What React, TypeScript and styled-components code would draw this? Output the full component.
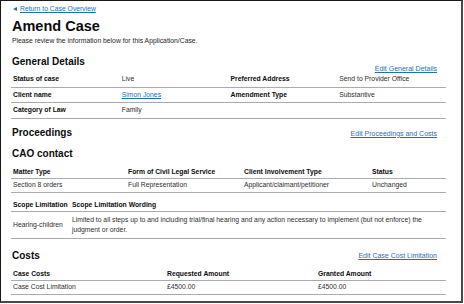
import React from 'react'
import styled, { createGlobalStyle } from 'styled-components'

const GlobalStyle = createGlobalStyle`
    html, body {
        margin: 0;
        padding: 0;
        background: #ffffff;
    }
    body {
        font-family: "Liberation Sans", Arial, sans-serif;
        color: #0b0c0c;
    }
`

const Frame = styled.div`
    box-sizing: border-box;
    width: 463px;
    height: 303px;
    border: 1px solid #1a1a1a;
    border-right: 2px solid #4a4a4a;
    border-bottom: 2px solid #4a4a4a;
    padding: 4px 15px 0 10px;
    overflow: hidden;
`

const BackLink = styled.a`
    display: flex;
    align-items: center;
    gap: 3px;
    padding-left: 2px;
    font-size: 6.8px;
    line-height: 8px;
    color: #1d70b8;
    span {
        text-decoration: underline;
    }
`

const Arrow = styled.i`
    width: 0;
    height: 0;
    border-top: 2.5px solid transparent;
    border-bottom: 2.5px solid transparent;
    border-right: 4px solid #1d70b8;
`

const Title = styled.h1`
    margin: 5px 0 0;
    padding-left: 1px;
    font-size: 14.5px;
    line-height: 16px;
    font-weight: 700;
`

const Intro = styled.p`
    margin: 1.5px 0 0;
    padding-left: 1px;
    font-size: 6.8px;
    line-height: 9px;
    color: #262626;
`

const SectionHeader = styled.div<{ $top: number }>`
    display: flex;
    justify-content: space-between;
    align-items: flex-start;
    margin-top: ${(p) => p.$top}px;
`

const SectionTitle = styled.h2`
    margin: 0;
    padding-left: 1px;
    font-size: 10px;
    line-height: 12px;
    font-weight: 700;
`

const EditLink = styled.a<{ $drop: number }>`
    margin-top: ${(p) => p.$drop}px;
    margin-right: 9px;
    font-size: 7px;
    line-height: 7px;
    color: #1d70b8;
    text-decoration: underline;
`

const Table = styled.div<{ $cols: string; $top: number }>`
    display: grid;
    grid-template-columns: ${(p) => p.$cols};
    margin-top: ${(p) => p.$top}px;
`

const Cell = styled.div<{ $head?: boolean; $pad?: number; $lh?: number }>`
    display: flex;
    align-items: center;
    padding: ${(p) => p.$pad ?? 2}px 2px;
    border-bottom: 1px solid #a9acae;
    font-size: 6.8px;
    font-weight: ${(p) => (p.$head ? 700 : 400)};
    line-height: ${(p) => p.$lh ?? 8.5}px;
    white-space: ${(p) => (p.$head ? 'nowrap' : 'normal')};
    color: ${(p) => (p.$head ? '#0b0c0c' : '#2e2e2e')};
`

const InlineLink = styled.a`
    color: #1d70b8;
    text-decoration: underline;
`

const general: [string, React.ReactNode, string, string][] = [
    ['Status of case', 'Live', 'Preferred Address', 'Send to Provider Office'],
    [
        'Client name',
        <InlineLink>Simon Jones</InlineLink>,
        'Amendment Type',
        'Substantive',
    ],
    ['Category of Law', 'Family', '', ''],
]

export default function App(): JSX.Element {
    return (
        <>
            <GlobalStyle />
            <Frame>
                <BackLink>
                    <Arrow />
                    <span>Return to Case Overview</span>
                </BackLink>
                <Title>Amend Case</Title>
                <Intro>
                    Please review the information below for this
                    Application/Case.
                </Intro>

                <SectionHeader $top={11.5}>
                    <SectionTitle>General Details</SectionTitle>
                    <EditLink $drop={9}>Edit General Details</EditLink>
                </SectionHeader>
                <Table $cols="repeat(4, 1fr)" $top={0}>
                    {general.map((row, i) => (
                        <React.Fragment key={i}>
                            <Cell $head $pad={3}>
                                {row[0]}
                            </Cell>
                            <Cell $pad={3}>{row[1]}</Cell>
                            <Cell $head $pad={3}>
                                {row[2]}
                            </Cell>
                            <Cell $pad={3}>{row[3]}</Cell>
                        </React.Fragment>
                    ))}
                </Table>

                <SectionHeader $top={8}>
                    <SectionTitle>Proceedings</SectionTitle>
                    <EditLink $drop={3}>Edit Proceedings and Costs</EditLink>
                </SectionHeader>
                <SectionHeader $top={9}>
                    <SectionTitle>CAO contact</SectionTitle>
                </SectionHeader>
                <Table $cols="115px 116px 128px 1fr" $top={6.25}>
                    <Cell $head>Matter Type</Cell>
                    <Cell $head>Form of Civil Legal Service</Cell>
                    <Cell $head>Client Involvement Type</Cell>
                    <Cell $head>Status</Cell>
                    <Cell>Section 8 orders</Cell>
                    <Cell>Full Representation</Cell>
                    <Cell>Applicant/claimant/petitioner</Cell>
                    <Cell>Unchanged</Cell>
                </Table>
                <Table $cols="59px 1fr" $top={6}>
                    <Cell $head>Scope Limitation</Cell>
                    <Cell $head>Scope Limitation Wording</Cell>
                    <Cell $pad={3}>Hearing-children</Cell>
                    <Cell $pad={3} $lh={10}>
                        Limited to all steps up to and including trial/final
                        hearing and any action necessary to implement (but not
                        enforce) the judgment or order.
                    </Cell>
                </Table>

                <SectionHeader $top={10.75}>
                    <SectionTitle>Costs</SectionTitle>
                    <EditLink $drop={1.5}>Edit Case Cost Limitation</EditLink>
                </SectionHeader>
                <Table $cols="154px 151px 1fr" $top={5.75}>
                    <Cell $head>Case Costs</Cell>
                    <Cell $head>Requested Amount</Cell>
                    <Cell $head>Granted Amount</Cell>
                    <Cell>Case Cost Limitation</Cell>
                    <Cell>£4500.00</Cell>
                    <Cell>£4500.00</Cell>
                </Table>
            </Frame>
        </>
    )
}
